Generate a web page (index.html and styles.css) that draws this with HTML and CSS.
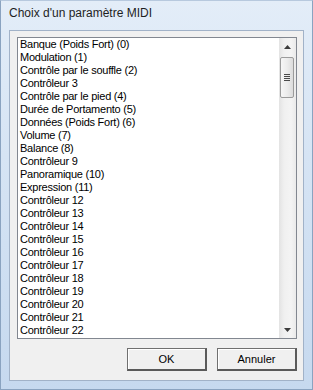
FILE: index.html
```html
<!DOCTYPE html>
<html lang="fr">
<head>
    <meta charset="UTF-8">
    <title>Choix d'un paramètre MIDI</title>
    <link rel="stylesheet" href="styles.css">
</head>
<body>
    <div class="window">
        <div class="titlebar">Choix d'un paramètre MIDI</div>
        <div class="client">
            <div class="listbox">
                <ul class="items">
                    <li>Banque (Poids Fort) (0)</li>
                    <li>Modulation (1)</li>
                    <li>Contrôle par le souffle (2)</li>
                    <li>Contrôleur 3</li>
                    <li>Contrôle par le pied (4)</li>
                    <li>Durée de Portamento (5)</li>
                    <li>Données (Poids Fort) (6)</li>
                    <li>Volume (7)</li>
                    <li>Balance (8)</li>
                    <li>Contrôleur 9</li>
                    <li>Panoramique (10)</li>
                    <li>Expression (11)</li>
                    <li>Contrôleur 12</li>
                    <li>Contrôleur 13</li>
                    <li>Contrôleur 14</li>
                    <li>Contrôleur 15</li>
                    <li>Contrôleur 16</li>
                    <li>Contrôleur 17</li>
                    <li>Contrôleur 18</li>
                    <li>Contrôleur 19</li>
                    <li>Contrôleur 20</li>
                    <li>Contrôleur 21</li>
                    <li>Contrôleur 22</li>
                </ul>
                <div class="scrollbar">
                    <div class="arrow">
                        <svg width="7" height="4" viewBox="0 0 7 4"><path d="M0 4 L3.5 0 L7 4 Z" fill="#3c3c3c"/></svg>
                    </div>
                    <div class="track">
                        <div class="thumb">
                            <span class="grip"></span>
                            <span class="grip"></span>
                            <span class="grip"></span>
                            <span class="grip"></span>
                        </div>
                    </div>
                    <div class="arrow">
                        <svg width="7" height="4" viewBox="0 0 7 4"><path d="M0 0 L3.5 4 L7 0 Z" fill="#3c3c3c"/></svg>
                    </div>
                </div>
            </div>
            <div class="buttons">
                <button class="btn">OK</button>
                <button class="btn">Annuler</button>
            </div>
        </div>
    </div>
</body>
</html>
```

FILE: styles.css
```css
body {
    margin: 0;
    padding: 0;
    background: #c9dbef;
}
.window {
    width: 313px;
    height: 390px;
    box-sizing: border-box;
    padding: 0 8px 8px 8px;
    background: linear-gradient(to bottom, #e3edf8 0%, #d6e4f4 40%, #c6d9ef 100%);
    border: 1px solid #8aa3c0;
    border-top-color: #b7c9de;
    display: flex;
    flex-direction: column;
}
.titlebar {
    height: 29px;
    line-height: 24px;
    font-family: "Liberation Sans", sans-serif;
    font-size: 12px;
    color: #1e1e1e;
    flex: none;
}
.client {
    flex: 1;
    background: #f0f0f0;
    border: 1px solid #a1b2c8;
    display: flex;
    flex-direction: column;
    padding: 6px 6px 0 7px;
}
.listbox {
    height: 300px;
    border: 1px solid #828790;
    background: #fff;
    display: flex;
}
.items {
    flex: 1;
    list-style: none;
    margin: 0;
    padding: 0 0 0 2px;
    font-family: "Liberation Sans", sans-serif;
    font-size: 11px;
    letter-spacing: -0.25px;
    color: #000;
}
.items li {
    height: 13px;
    line-height: 13px;
    white-space: nowrap;
}
.scrollbar {
    width: 17px;
    display: flex;
    flex-direction: column;
    background: linear-gradient(to right, #e3e3e3, #f0f0f0 30%, #f4f4f4 70%, #eaeaea);
}
.arrow {
    height: 17px;
    display: flex;
    align-items: center;
    justify-content: center;
}
.track {
    flex: 1;
}
.thumb {
    margin: 2px 0 0 1px;
    width: 14px;
    height: 41px;
    box-sizing: border-box;
    border: 1px solid #9b9b9b;
    border-radius: 2px;
    background: linear-gradient(to right, #f6f6f6, #ececec 50%, #dcdcdc);
    display: flex;
    flex-direction: column;
    align-items: center;
    justify-content: center;
    gap: 1px;
}
.grip {
    width: 6px;
    height: 1px;
    background: #4a4a4a;
}
.buttons {
    display: flex;
    justify-content: flex-end;
    gap: 10px;
    margin-top: 9px;
}
.btn {
    width: 80px;
    height: 23px;
    font-family: "Liberation Sans", sans-serif;
    font-size: 11px;
    color: #000;
    background: #f0f0f0;
    border: 1px solid #707070;
    border-right: 2px solid #5a5a5a;
    border-bottom: 2px solid #5a5a5a;
    box-shadow: inset 1px 1px 0 #fff;
    padding: 0;
}
```
